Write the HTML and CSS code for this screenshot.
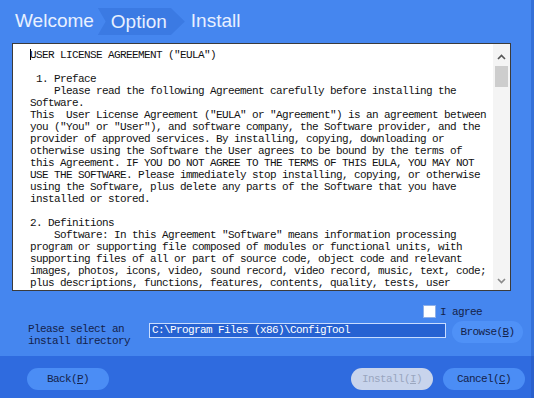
FILE: index.html
```html
<!DOCTYPE html>
<html lang="en">
<head>
    <meta charset="UTF-8">
    <title>Setup - Option</title>
    <link rel="stylesheet" href="styles.css">
</head>
<body>
    <div class="installer">
        <div class="steps">
            <span class="step">Welcome</span>
            <span class="step step-active">Option</span>
            <span class="step">Install</span>
        </div>

        <div class="content">
            <div class="eula">
                <div class="eula-text"><span class="caret"></span>USER LICENSE AGREEMENT ("EULA")

 1. Preface
    Please read the following Agreement carefully before installing the
Software.
This  User License Agreement ("EULA" or "Agreement") is an agreement between
you ("You" or "User"), and software company, the Software provider, and the
provider of approved services. By installing, copying, downloading or
otherwise using the Software the User agrees to be bound by the terms of
this Agreement. IF YOU DO NOT AGREE TO THE TERMS OF THIS EULA, YOU MAY NOT
USE THE SOFTWARE. Please immediately stop installing, copying, or otherwise
using the Software, plus delete any parts of the Software that you have
installed or stored.

2. Definitions
    Software: In this Agreement "Software" means information processing
program or supporting file composed of modules or functional units, with
supporting files of all or part of source code, object code and relevant
images, photos, icons, video, sound record, video record, music, text, code;
plus descriptions, functions, features, contents, quality, tests, user</div>
                <div class="scrollbar">
                    <svg class="arrow" width="17" height="14" viewBox="0 0 17 14"><path d="M5 9 L8.5 5.5 L12 9" fill="none" stroke="#555" stroke-width="1.6"/></svg>
                    <div class="track"><div class="thumb"></div></div>
                    <svg class="arrow" width="17" height="14" viewBox="0 0 17 14"><path d="M5 5 L8.5 8.5 L12 5" fill="none" stroke="#8a8a8a" stroke-width="1.6"/></svg>
                </div>
            </div>

            <div class="agree-row">
                <label class="agree"><span class="checkbox"></span>I agree</label>
            </div>

            <div class="dir-row">
                <span class="dir-label">Please select an<br>install directory</span>
                <div class="dir-input">C:\Program Files (x86)\ConfigTool</div>
                <button class="btn btn-browse">Browse(<u>B</u>)</button>
            </div>
        </div>

        <div class="footer">
            <button class="btn">Back(<u>P</u>)</button>
            <span class="spacer"></span>
            <button class="btn" disabled>Install(<u>I</u>)</button>
            <button class="btn">Cancel(<u>C</u>)</button>
        </div>
    </div>
</body>
</html>
```

FILE: styles.css
```css
body {
    margin: 0;
    background: #fff;
    font-family: "Liberation Mono", monospace;
    font-size: 11px;
    letter-spacing: -0.6px;
}
.installer {
    width: 534px;
    height: 398px;
    display: flex;
    flex-direction: column;
    background: #4586ef;
    box-shadow: inset -3px 0 0 #3470d8;
}
.steps {
    height: 42px;
    display: flex;
    align-items: center;
    padding-left: 15px;
    font-family: "Liberation Sans", Arial, sans-serif;
    font-size: 19px;
    letter-spacing: 0;
    color: #e8f0ff;
}
.step {
    display: flex;
    align-items: center;
    height: 27px;
    margin-right: 4px;
}
.step-active {
    padding: 0 18px 0 13px;
    margin-right: 6px;
    margin-top: 1px;
    background: #3b7ae3;
    clip-path: polygon(0 0, 84% 0, 100% 50%, 84% 100%, 0 100%, 9% 50%);
}
.content {
    flex: 1;
    padding: 1px 0 0 12px;
}
.eula {
    width: 497px;
    height: 246px;
    border: 1px solid #3b3b3b;
    background: #fff;
    display: flex;
}
.eula-text {
    flex: 1;
    overflow: hidden;
    white-space: pre;
    padding: 5px 0 0 17px;
    line-height: 12px;
    color: #111;
}
.caret {
    display: inline-block;
    width: 1px;
    height: 11px;
    background: #000;
    vertical-align: -2px;
    margin-right: -1px;
}
.scrollbar {
    width: 17px;
    display: flex;
    flex-direction: column;
    background: #f4f4f4;
}
.arrow {
    display: block;
    margin-top: 6px;
}
.track {
    flex: 1;
    padding: 2px 2px;
}
.thumb {
    height: 21px;
    background: #cdcdcd;
}
.scrollbar .arrow:last-child {
    margin: 0 0 2px;
}
.agree-row {
    display: flex;
    justify-content: flex-end;
    padding: 15px 0 0;
    width: 470px;
}
.agree {
    display: flex;
    align-items: center;
    color: #14224a;
    height: 11px;
}
.checkbox {
    width: 11px;
    height: 11px;
    background: #fff;
    border: 1px solid #8fb0e8;
    margin-right: 4px;
}
.dir-row {
    display: flex;
    align-items: flex-start;
    margin-top: 4px;
    padding-left: 16px;
}
.dir-label {
    color: #14224a;
    line-height: 12px;
    width: 121px;
    padding-top: 2px;
}
.dir-input {
    width: 293px;
    height: 13px;
    line-height: 13px;
    margin-top: 2px;
    padding-left: 2px;
    background: #2662d2;
    border: 1px solid #c8dcff;
    color: #fff;
}
.btn {
    font-family: "Liberation Mono", monospace;
    font-size: 11px;
    letter-spacing: -0.6px;
    color: #14224a;
    background: #4b8df5;
    border: none;
    border-radius: 11px;
    height: 22px;
    width: 82px;
    padding: 0;
}
.btn u {
    text-decoration-thickness: 1px;
}
.btn-browse {
    width: 71px;
    margin-left: 6px;
    background: #4f91f7;
}
.btn:disabled {
    background: #c8d4ec;
    color: #9aa6bf;
}
.footer {
    height: 42px;
    display: flex;
    align-items: flex-start;
    padding: 12px 9px 0 27px;
    box-sizing: border-box;
    background: #2f6bdf;
    box-shadow: inset -3px 0 0 #2a60cc;
}
.spacer {
    flex: 1;
}
.footer .btn + .btn {
    margin-left: 10px;
}
```
